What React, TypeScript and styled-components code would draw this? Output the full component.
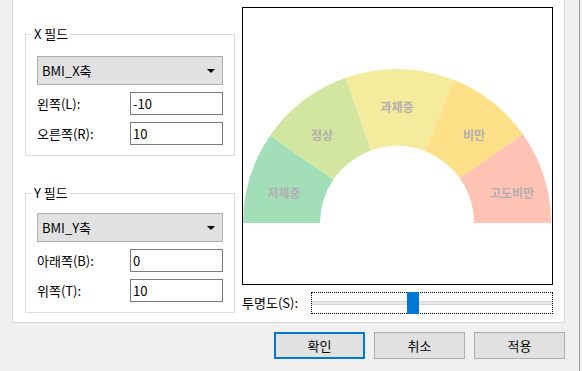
import React from "react";
import styled, { createGlobalStyle } from "styled-components";

const GlobalStyle = createGlobalStyle`
  html, body {
    margin: 0;
    padding: 0;
    background: #f0f0f0;
  }
  body {
    font-family: "Noto Sans CJK KR", "Noto Sans", sans-serif;
    font-size: 13px;
    color: #000000;
  }
`;

type Segment = {
  label: string;
  from: number;
  to: number;
  color: string;
};

const segments: Segment[] = [
  { label: "저체중", from: 180, to: 145.5, color: "#a2dfb9" },
  { label: "정상", from: 145.5, to: 109.5, color: "#d2e6a0" },
  { label: "과체중", from: 109.5, to: 68.5, color: "#f5eb9c" },
  { label: "비만", from: 68.5, to: 35.3, color: "#fde087" },
  { label: "고도비만", from: 35.3, to: 0, color: "#ffc3b5" }
];

const CX = 154;
const CY = 215;
const R_OUT = 154;
const R_IN = 77;

function pt(r: number, deg: number) {
  const a = (deg * Math.PI) / 180;
  return [CX + r * Math.cos(a), CY - r * Math.sin(a)];
}

function segPath(s: Segment) {
  const [x1, y1] = pt(R_OUT, s.from);
  const [x2, y2] = pt(R_OUT, s.to);
  const [x3, y3] = pt(R_IN, s.to);
  const [x4, y4] = pt(R_IN, s.from);
  return `M${x1} ${y1} A${R_OUT} ${R_OUT} 0 0 1 ${x2} ${y2} L${x3} ${y3} A${R_IN} ${R_IN} 0 0 0 ${x4} ${y4} Z`;
}

// label positions, measured from the chart area
const labelPos: Record<string, [number, number]> = {
  저체중: [41, 184],
  정상: [79, 126],
  과체중: [154, 98],
  비만: [231, 126],
  고도비만: [269, 184]
};

function Gauge() {
  return (
    <svg width="309" height="276" viewBox="0 0 309 276">
      {segments.map((s) => (
        <path key={s.label} d={segPath(s)} fill={s.color} />
      ))}
      {segments.map((s) => (
        <text
          key={s.label + "-t"}
          x={labelPos[s.label][0]}
          y={labelPos[s.label][1]}
          textAnchor="middle"
          dominantBaseline="central"
          fontFamily='"Noto Sans CJK KR", sans-serif'
          fontWeight="700"
          fontSize="12"
          fill="#b4aeb0"
        >
          {s.label}
        </text>
      ))}
    </svg>
  );
}

function FieldGroup(props: {
  title: string;
  axis: string;
  topPad: number;
  rows: { label: string; value: string }[];
}) {
  return (
    <Group topPad={props.topPad}>
      <GroupTitle>{props.title}</GroupTitle>
      <Dropdown>
        <span>{props.axis}</span>
        <Caret />
      </Dropdown>
      {props.rows.map((r) => (
        <FieldRow key={r.label}>
          <FieldLabel>{r.label}</FieldLabel>
          <Input>{r.value}</Input>
        </FieldRow>
      ))}
    </Group>
  );
}

export default function App() {
  const opacity = 42;

  return (
    <Window>
      <GlobalStyle />
      <Panel>
        <LeftColumn>
          <FieldGroup
            title="X 필드"
            axis="BMI_X축"
            topPad={21}
            rows={[
              { label: "왼쪽(L):", value: "-10" },
              { label: "오른쪽(R):", value: "10" }
            ]}
          />
          <FieldGroup
            title="Y 필드"
            axis="BMI_Y축"
            topPad={19}
            rows={[
              { label: "아래쪽(B):", value: "0" },
              { label: "위쪽(T):", value: "10" }
            ]}
          />
        </LeftColumn>
        <RightColumn>
          <ChartBox>
            <Gauge />
          </ChartBox>
          <SliderRow>
            <SliderLabel>투명도(S):</SliderLabel>
            <Slider>
              <Track />
              <Thumb style={{ left: `${(227 * opacity) / 100}px` }} />
            </Slider>
          </SliderRow>
        </RightColumn>
      </Panel>
      <ButtonBar>
        <Button primary>확인</Button>
        <Button>취소</Button>
        <Button>적용</Button>
      </ButtonBar>
    </Window>
  );
}

const Window = styled.div`
  width: 580px;
  height: 371px;
  border-right: 1px solid #9c9c9c;
  padding-left: 12px;
  box-sizing: border-box;
  display: flex;
  flex-direction: column;
  overflow: hidden;
`;

const Panel = styled.div`
  width: 553px;
  height: 324px;
  margin-top: -1px;
  box-sizing: border-box;
  background: #ffffff;
  border: 1px solid #dadada;
  display: flex;
  flex-direction: row;
  padding: 0 11px 0 12px;
  gap: 7px;
`;

const LeftColumn = styled.div`
  width: 210px;
  display: flex;
  flex-direction: column;
  padding-top: 34px;
  gap: 37px;
`;

const Group = styled.div<{ topPad: number }>`
  position: relative;
  border: 1px solid #dcdcdc;
  padding: ${(p) => p.topPad}px 11px 10px 11px;
  display: flex;
  flex-direction: column;
  gap: 7px;
`;

const GroupTitle = styled.div`
  position: absolute;
  top: -9px;
  left: 6px;
  padding: 0 2px;
  background: #ffffff;
  line-height: 16px;
`;

const Dropdown = styled.div`
  height: 29px;
  box-sizing: border-box;
  background: #e1e1e1;
  border: 1px solid #adadad;
  display: flex;
  align-items: center;
  justify-content: space-between;
  padding: 0 7px 0 4px;
`;

const Caret = styled.div`
  width: 0;
  height: 0;
  border-left: 4px solid transparent;
  border-right: 4px solid transparent;
  border-top: 4px solid #000000;
`;

const FieldRow = styled.div`
  display: flex;
  align-items: center;
  justify-content: space-between;
  height: 23px;
`;

const FieldLabel = styled.div`
  line-height: 16px;
`;

const Input = styled.div`
  width: 93px;
  height: 23px;
  box-sizing: border-box;
  border: 1px solid #7a7a7a;
  background: #ffffff;
  padding-left: 2px;
  display: flex;
  align-items: center;
`;

const RightColumn = styled.div`
  width: 311px;
  display: flex;
  flex-direction: column;
  padding-top: 7px;
  gap: 7px;
`;

const ChartBox = styled.div`
  height: 278px;
  box-sizing: border-box;
  border: 1px solid #000000;
  background: #ffffff;
  overflow: hidden;
`;

const SliderRow = styled.div`
  display: flex;
  align-items: center;
  justify-content: space-between;
  height: 22px;
`;

const SliderLabel = styled.div`
  line-height: 16px;
`;

const Slider = styled.div`
  position: relative;
  width: 242px;
  height: 22px;
  box-sizing: border-box;
  border: 1px dotted #000000;
  display: flex;
  align-items: center;
`;

const Track = styled.div`
  width: 100%;
  height: 4px;
  box-sizing: border-box;
  background: #e7e7e7;
  border-top: 1px solid #d6d6d6;
  border-bottom: 1px solid #d6d6d6;
`;

const Thumb = styled.div`
  position: absolute;
  top: -1px;
  width: 12px;
  height: 22px;
  background: #0078d7;
`;

const ButtonBar = styled.div`
  display: flex;
  justify-content: flex-end;
  gap: 9px;
  padding-right: 14px;
  margin-top: 9px;
`;

const Button = styled.div<{ primary?: boolean }>`
  width: 91px;
  height: 27px;
  box-sizing: border-box;
  background: #e1e1e1;
  border: ${(p) => (p.primary ? "2px solid #0078d7" : "1px solid #adadad")};
  display: flex;
  align-items: center;
  justify-content: center;
`;
